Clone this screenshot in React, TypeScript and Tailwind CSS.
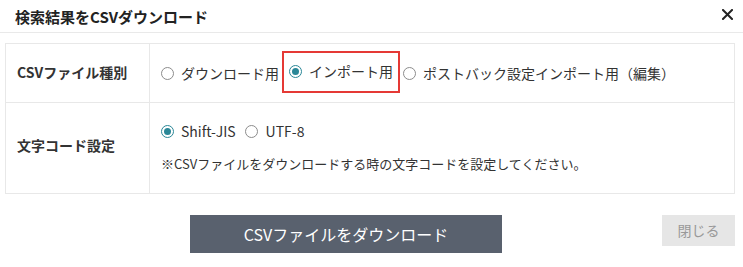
import React from "react";

function Radio({ checked }: { checked?: boolean }) {
  return checked ? (
    <span className="flex h-[13px] w-[13px] shrink-0 items-center justify-center rounded-full border border-[#2a8797] bg-white">
      <span className="h-[7px] w-[7px] rounded-full bg-[#2a8797]" />
    </span>
  ) : (
    <span className="h-[13px] w-[13px] shrink-0 rounded-full border border-[#8c8c8c] bg-white" />
  );
}

export default function App() {
  return (
    <div
      className="w-[743px] h-[267px] bg-white text-[#333] overflow-hidden"
      style={{ fontFamily: '"Noto Sans CJK JP", "Noto Sans", sans-serif' }}
    >
      <div className="flex h-[32px] items-center justify-between pl-[15px] pr-[10px]">
        <h1 className="text-[15px] font-bold leading-none text-[#222]">検索結果をCSVダウンロード</h1>
        <svg width="11" height="11" viewBox="0 0 11 11" className="mt-[-4px]">
          <path d="M1 1 L10 10 M10 1 L1 10" stroke="#222" strokeWidth="2" strokeLinecap="square" />
        </svg>
      </div>
      <div className="h-px bg-[#e9e9e9]" />

      <div className="mx-[5px] mt-[10px] w-[730px] border border-[#e8e8e8]">
        <div className="flex h-[59px] border-b border-[#e8e8e8]">
          <div className="flex w-[144px] shrink-0 items-center border-r border-[#e8e8e8] pb-[1px] pl-[11px] text-[14px] font-bold">
            CSVファイル種別
          </div>
          <div className="flex items-center pl-[11px] text-[14px]">
            <label className="flex items-center gap-[7px]">
              <Radio />
              <span>ダウンロード用</span>
            </label>
            <label className="mb-[3px] ml-[3px] flex h-[42px] items-center gap-[7px] border-2 border-[#e53935] pl-[5px] pr-[5px]">
              <Radio checked />
              <span>インポート用</span>
            </label>
            <label className="ml-[3px] flex items-center gap-[7px]">
              <Radio />
              <span>ポストバック設定インポート用（編集）</span>
            </label>
          </div>
        </div>
        <div className="flex h-[90px]">
          <div className="flex w-[144px] shrink-0 items-center border-r border-[#e8e8e8] pb-[5px] pl-[11px] text-[14px] font-bold">
            文字コード設定
          </div>
          <div className="flex flex-col pl-[11px] pt-[18px]">
            <div className="flex h-[20px] items-center text-[14px]">
              <label className="flex items-center gap-[7px]">
                <Radio checked />
                <span>Shift-JIS</span>
              </label>
              <label className="ml-[9px] flex items-center gap-[8px]">
                <Radio />
                <span>UTF-8</span>
              </label>
            </div>
            <p className="mt-[13px] text-[13px] leading-[20px]">
              ※CSVファイルをダウンロードする時の文字コードを設定してください。
            </p>
          </div>
        </div>
      </div>

      <div className="mt-[21px] flex items-start pl-[190px] pr-[8px]">
        <button className="h-[38px] w-[312px] bg-[#59616e] text-[16px] text-white">
          CSVファイルをダウンロード
        </button>
        <button className="ml-auto h-[31px] w-[73px] bg-[#e6e6e6] text-[14px] text-[#999]">
          閉じる
        </button>
      </div>
    </div>
  );
}
